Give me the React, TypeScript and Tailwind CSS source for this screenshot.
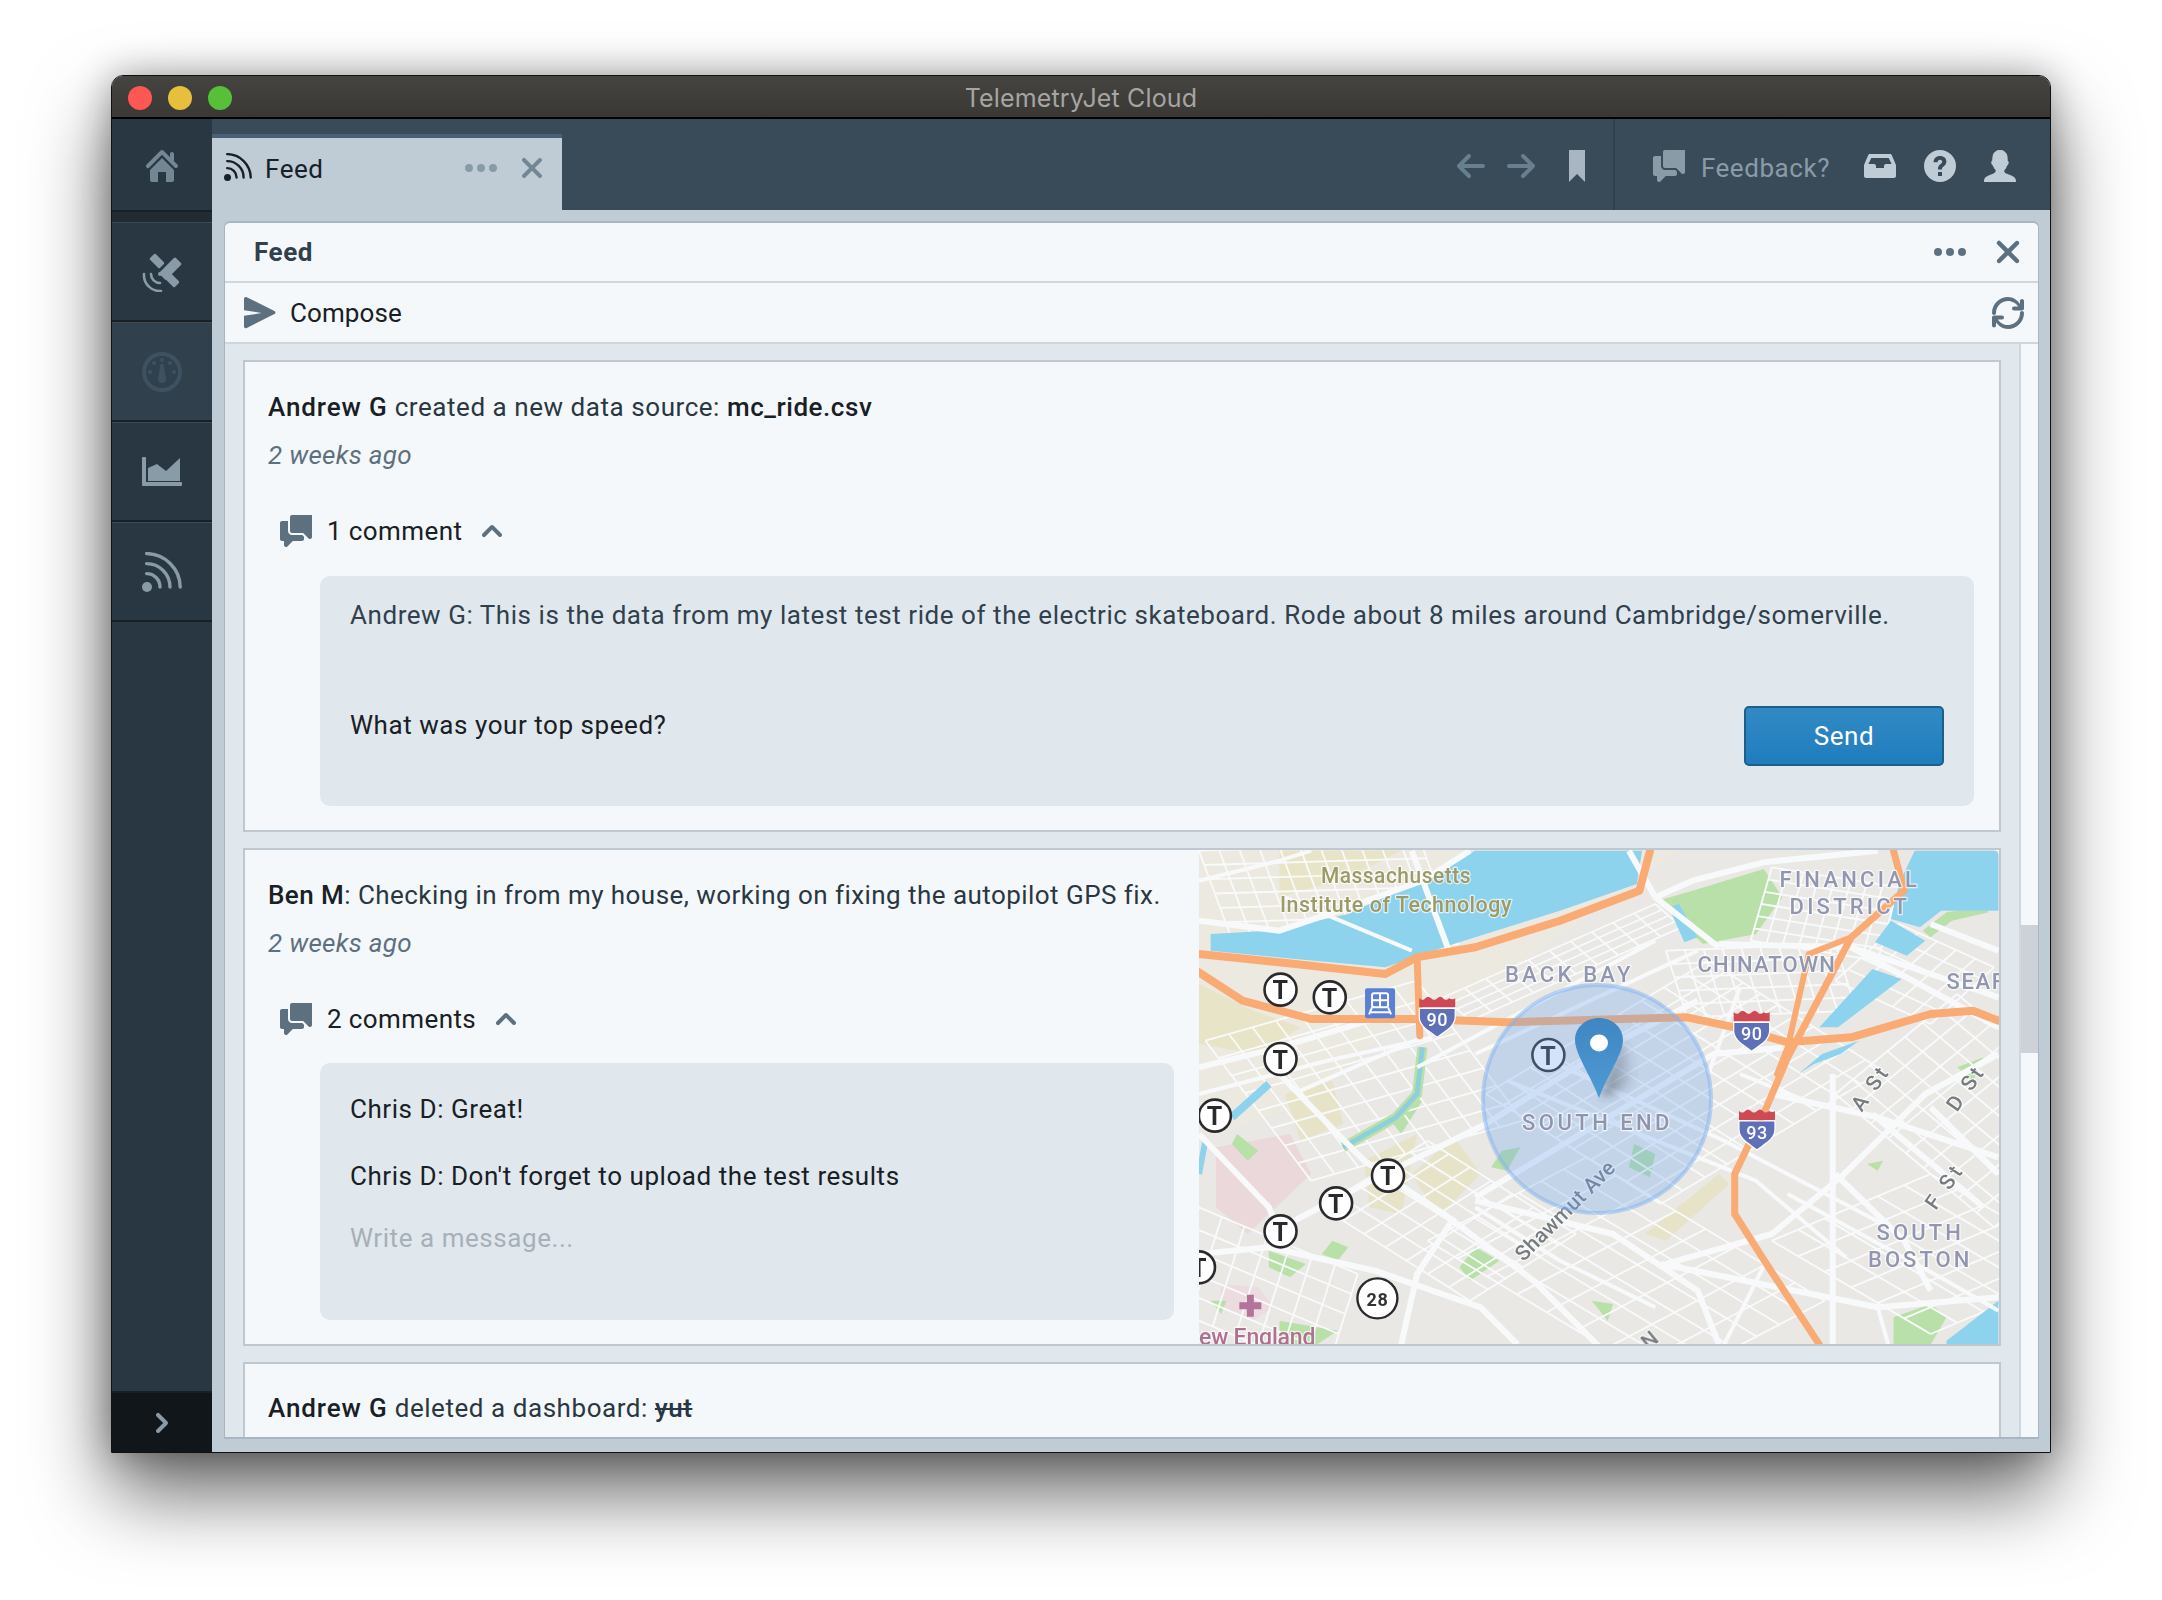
import type { ReactNode } from "react";

// Blueprint style icon paths, drawn on a 16 unit box
const HOME = "M2 10v5c0 .55.45 1 1 1h3v-5h4v5h3c.55 0 1-.45 1-1v-5L8 4l-6 6zm13.71-2.71L14 5.59V2c0-.55-.45-1-1-1s-1 .45-1 1v1.59L8.71.29C8.53.11 8.28 0 8 0s-.53.11-.71.29l-7 7a1.003 1.003 0 001.42 1.42L8 2.41l6.29 6.29c.18.19.43.3.71.3a1.003 1.003 0 00.71-1.71z";
const CHAT = "M6 10c-1.1 0-2-.9-2-2V3H1c-.55 0-1 .45-1 1v8c0 .55.45 1 1 1h1v2a1.003 1.003 0 001.71.71L6.41 13H11c.55 0 1-.45 1-1v-1.17l-.83-.83H6zm9-10H6c-.55 0-1 .45-1 1v7c0 .55.45 1 1 1h5.59l2.71 2.71c.17.18.42.29.7.29.55 0 1-.45 1-1V9c.55 0 1-.45 1-1V1c0-.55-.45-1-1-1z";
const CROSS = "M9.41 8l3.29-3.29c.19-.18.3-.43.3-.71a1.003 1.003 0 00-1.71-.71L8 6.59l-3.29-3.3a1.003 1.003 0 00-1.42 1.42L6.59 8 3.3 11.29c-.19.18-.3.43-.3.71a1.003 1.003 0 001.71.71L8 9.41l3.29 3.29c.18.19.43.3.71.3a1.003 1.003 0 00.71-1.71L9.41 8z";
const MORE = "M2 6a2 2 0 100 4 2 2 0 100-4zM14 6a2 2 0 100 4 2 2 0 100-4zM8 6a2 2 0 100 4 2 2 0 100-4z";
const ARROW_LEFT = "M13.99 6.99H4.41L7.7 3.7c.18-.18.29-.43.29-.71a1.003 1.003 0 00-1.71-.71l-5 5c-.18.18-.29.43-.29.71 0 .28.11.53.29.71l5 5a1.003 1.003 0 001.42-1.42L4.41 8.99H14c.55 0 1-.45 1-1s-.45-1-1.01-1z";
const ARROW_RIGHT = "M14.7 7.29l-5-5a.965.965 0 00-.71-.3 1.003 1.003 0 00-.71 1.71l3.29 3.29H1.99c-.55 0-1 .45-1 1s.45 1 1 1h9.59l-3.29 3.29a1.003 1.003 0 001.42 1.42l5-5c.18-.18.29-.43.29-.71 0-.28-.12-.52-.3-.7z";
const BOOKMARK = "M4 0h8v16l-4-4-4 4z";
const INBOX = "M13.91 2.6c-.16-.36-.51-.6-.92-.6h-10c-.41 0-.77.25-.92.6L0 7.45V13c0 .55.45 1 1 1h14c.55 0 1-.45 1-1V7.45L13.91 2.6zM11 7c-.55 0-1 .45-1 1v1H6V8c0-.55-.45-1-1-1H2.2l1.44-3h8.72l1.44 3H11z";
const HELP = "M8 0a8 8 0 100 16A8 8 0 008 0zM7 11h2v2H7v-2zm1-8c1.9 0 3.2 1.1 3.2 2.8 0 1.2-.7 1.9-1.4 2.4-.6.4-.8.7-.8 1.3v.2H7v-.4c0-1.1.5-1.7 1.2-2.2.6-.4.9-.7.9-1.2 0-.6-.5-1-1.1-1-.7 0-1.2.5-1.2 1.2H4.8C4.8 4.2 6.1 3 8 3z";
const PERSON = "M15.68 14.32c-.46-1.05-2.68-1.75-4.16-2.4-1.48-.65-1.28-1.05-1.33-1.59-.01-.07-.01-.15-.01-.23.51-.45.92-1.07 1.19-1.78 0 0 .01-.04.02-.05.06-.15.11-.32.15-.48.34-.07.54-.44.61-.78.08-.14.23-.48.2-.87-.05-.5-.25-.73-.47-.82v-.09c0-.63-.06-1.55-.17-2.15A3.671 3.671 0 0010.32.72C9.68.25 8.79 0 8 0s-1.68.25-2.31.72c-.61.45-1.06 1.09-1.28 1.85-.05.17-.09.34-.12.51-.12.6-.17 1.51-.17 2.14v.08c-.24.09-.45.32-.5.83-.03.38.13.72.2.86.08.35.28.72.63.78.04.17.09.33.15.49 0 .01.01.02.01.03l.01.01c.27.72.7 1.35 1.22 1.8 0 .07-.01.14-.01.21-.05.54.1.94-1.37 1.59-1.48.65-3.7 1.35-4.16 2.4-.46 1.05-.27 1.67-.27 1.67h15.92c-.01.01.18-.61-.28-1.66z";
const REFRESH = "M15 1c-.55 0-1 .45-1 1v1.46C12.54 1.38 10.43 0 8 0 3.58 0 0 3.58 0 8c0 .55.45 1 1 1s1-.45 1-1c0-3.31 2.69-6 6-6 2.13 0 3.99 1.11 5.06 2.78H11c-.55 0-1 .45-1 1s.45 1 1 1h4c.55 0 1-.45 1-1V2c0-.55-.45-1-1-1zm0 6c-.55 0-1 .45-1 1 0 3.31-2.69 6-6 6-2.13 0-3.99-1.11-5.06-2.78H5c.55 0 1-.45 1-1s-.45-1-1-1H1c-.55 0-1 .45-1 1v4c0 .55.45 1 1 1s1-.45 1-1v-1.46C3.46 14.62 5.57 16 8 16c4.42 0 8-3.58 8-8 0-.55-.45-1-1-1z";
const CHEVRON_UP = "M12.71 9.29l-4-4C8.53 5.11 8.28 5 8 5s-.53.11-.71.29l-4 4a1.003 1.003 0 001.42 1.42L8 7.41l3.29 3.29c.18.19.43.3.71.3a1.003 1.003 0 00.71-1.71z";
const CHEVRON_RIGHT = "M10.71 7.29l-4-4a1.003 1.003 0 00-1.42 1.42L8.59 8 5.3 11.29c-.19.18-.3.43-.3.71a1.003 1.003 0 001.71.71l4-4c.18-.18.29-.43.29-.71 0-.28-.11-.53-.29-.71z";
const SEND = "M1.4.1l13.8 6.9c.5.25.65.75.4 1.2-.1.15-.25.3-.4.35L1.4 15.5C.95 15.75.4 15.6.15 15.2.05 15.05 0 14.9 0 14.7V9.4L8.8 8 0 6.6V.9C0 .4.4 0 .9 0c.2 0 .35.05.5.1z";

const Icon = ({ d, size = 32, className }: { d: string; size?: number; className: string }) => (
    <svg viewBox="0 0 16 16" width={size} height={size} className={`shrink-0 fill-current ${className}`}>
        <path d={d} fillRule="evenodd" />
    </svg>
);

const RssIcon = ({ size, className }: { size: number; className: string }) => (
    <svg viewBox="0 0 40 40" width={size} height={size} className={`shrink-0 ${className}`}>
        <circle cx="5" cy="35" r="5" fill="currentColor" />
        <g fill="none" stroke="currentColor" strokeWidth="3.4" strokeLinecap="round">
            <path d="M4.6 1.6A34 34 0 0 1 38.2 35" />
            <path d="M4.6 11.6A23.4 23.4 0 0 1 28 35" />
            <path d="M4.6 21.6A13.4 13.4 0 0 1 18 35" />
        </g>
    </svg>
);

const SatelliteIcon = () => (
    <svg viewBox="0 0 40 40" width={40} height={40} className="text-[#8a9ba8]">
        <g fill="currentColor">
            <rect x="17" y="12" width="23" height="10" rx="1.5" transform="rotate(-45 28 17)" />
            <rect x="8" y="5" width="14" height="8" rx="1.5" transform="rotate(45 15 9)" />
            <rect x="23" y="24" width="14" height="8" rx="1.5" transform="rotate(45 30 28)" />
            <circle cx="18" cy="22" r="2" />
        </g>
        <g fill="none" stroke="currentColor" strokeWidth="2.6" strokeLinecap="round">
            <path d="M9 22a9 9 0 0 0 9 9" />
            <path d="M2 22a16 16 0 0 0 17 17" />
        </g>
    </svg>
);

const GaugeIcon = () => (
    <svg viewBox="0 0 40 40" width={40} height={40} className="text-[#3e5160]">
        <circle cx="20" cy="20" r="18" fill="none" stroke="currentColor" strokeWidth="4" />
        <g fill="currentColor">
            <circle cx="20" cy="8" r="2" />
            <circle cx="12" cy="11" r="2" />
            <circle cx="28" cy="11" r="2" />
            <circle cx="8" cy="20" r="2" />
            <circle cx="32" cy="20" r="2" />
            <path d="M18.5 12h3l2.5 15a4 4 0 0 1-8 0z" />
        </g>
    </svg>
);

const AreaChartIcon = () => (
    <svg viewBox="0 0 40 32" width={40} height={32} className="mt-[2px] text-[#8a9ba8]">
        <path fill="currentColor" d="M0 1a1 1 0 0 1 1-1h2a1 1 0 0 1 1 1v24h35a1 1 0 0 1 1 1v2a1 1 0 0 1-1 1H1a1 1 0 0 1-1-1z" />
        <path fill="currentColor" d="M6 11l9-4 9 7L38 1v23H6z" />
    </svg>
);

// Map is traced in the coordinates of a reference crop, then mapped to the 800x495 box
const mx = (x: number) => (x - 18) / 1.889;
const my = (y: number) => (y - 28) / 3;
const pts = (list: number[]) => {
    let out = "";
    for (let i = 0; i < list.length; i += 2) out += `${mx(list[i]).toFixed(1)},${my(list[i + 1]).toFixed(1)} `;
    return out;
};

const MAJOR_ROADS = [
    [18, 240, 170, 270, 300, 200, 440, 120, 530, 30],
    [420, 30, 490, 330],
    [150, 1180, 330, 1030, 560, 850, 800, 610, 960, 480],
    [18, 680, 170, 620, 380, 520],
    [540, 1070, 760, 860, 990, 640, 1130, 620],
    [170, 700, 280, 880, 330, 960, 480, 1120, 650, 1320, 770, 1512],
    [540, 1080, 800, 1180, 960, 1350, 1000, 1512],
    [1215, 700, 1215, 1512],
    [1100, 760, 1300, 830, 1528, 950],
    [1528, 640, 1390, 760, 1230, 1010, 1100, 1180, 900, 1270],
    [890, 1270, 1300, 1400, 1528, 1370],
    [1250, 320, 1528, 560],
    [1400, 250, 1528, 330],
    [1290, 820, 1500, 1100],
    [1220, 1000, 1350, 1200, 1400, 1350],
    [1400, 800, 1528, 1000],
    [1000, 320, 880, 170, 830, 30],
    [880, 170, 950, 120, 1085, 65, 1300, 30],
    [1000, 310, 1250, 320, 1400, 400, 1528, 470],
    [18, 1240, 150, 1220, 350, 1290, 550, 1400, 620, 1512],
    [400, 1512, 430, 1300, 500, 1130],
    [18, 880, 150, 1100, 170, 1180],
    [430, 680, 880, 300],
    [540, 640, 960, 330],
    [600, 720, 1070, 1020, 1240, 1250],
    [680, 660, 1010, 900, 1310, 1150],
    [18, 760, 260, 660, 460, 590],
    [210, 750, 440, 590],
    [540, 1100, 700, 1260, 880, 1400],
    [1090, 1260, 1010, 1512],
    [1300, 1400, 1320, 1512],
    [1130, 1060, 1430, 1320, 1528, 1410],
    [1040, 700, 1180, 790],
    [1040, 440, 980, 700],
    [180, 170, 420, 330],
    [18, 120, 170, 60, 230, 30],
];

// blocks of small parallel streets: origin, two directions, number of cells
const STREET_GRIDS = [
    { o: [480, 470], u: [400, -280], v: [50, 70], nu: 10, nv: 4 },
    { o: [560, 760], u: [420, -400], v: [330, 330], nu: 10, nv: 10 },
    { o: [1220, 760], u: [300, 400], v: [230, -300], nu: 9, nv: 7 },
    { o: [1100, 1200], u: [300, 280], v: [300, -200], nu: 6, nv: 6 },
    { o: [30, 600], u: [400, -180], v: [200, 420], nu: 9, nv: 8 },
    { o: [18, 30], u: [420, -20], v: [70, 300], nu: 11, nv: 7 },
    { o: [450, 1200], u: [450, 430], v: [300, -250], nu: 8, nv: 7 },
    { o: [250, 1100], u: [200, -200], v: [280, 280], nu: 6, nv: 7 },
    { o: [18, 1100], u: [300, 200], v: [-60, 300], nu: 7, nv: 5 },
    { o: [900, 330], u: [320, -20], v: [40, 200], nu: 9, nv: 5 },
    { o: [1100, 80], u: [240, 60], v: [-40, 220], nu: 8, nv: 6 },
    { o: [1340, 250], u: [180, 130], v: [-120, 170], nu: 5, nv: 5 },
];

const streetLines = () => {
    const lines: number[][] = [];
    for (const g of STREET_GRIDS) {
        for (let i = 0; i <= g.nu; i++) {
            const sx = g.o[0] + (g.u[0] * i) / g.nu;
            const sy = g.o[1] + (g.u[1] * i) / g.nu;
            lines.push([sx, sy, sx + g.v[0], sy + g.v[1]]);
        }
        for (let i = 0; i <= g.nv; i++) {
            const sx = g.o[0] + (g.v[0] * i) / g.nv;
            const sy = g.o[1] + (g.v[1] * i) / g.nv;
            lines.push([sx, sy, sx + g.u[0], sy + g.u[1]]);
        }
    }
    return lines;
};

const PARKS = [
    [950, 150, 1085, 85, 1120, 170, 1070, 280, 970, 310, 885, 180],
    [540, 1220, 585, 1260, 530, 1320, 510, 1280],
    [150, 1230, 220, 1270, 190, 1310, 150, 1280],
    [90, 880, 130, 930, 110, 960, 80, 910],
    [270, 1200, 300, 1220, 280, 1260, 250, 1240],
    [1330, 1430, 1400, 1390, 1430, 1430, 1400, 1512, 1330, 1512],
    [1450, 680, 1500, 650, 1480, 720],
    [590, 930, 625, 920, 600, 990, 570, 980],
    [840, 910, 880, 940, 870, 1010, 830, 980],
    [760, 1380, 800, 1390, 790, 1440],
    [1280, 970, 1310, 960, 1300, 990],
    [40, 1380, 70, 1380, 60, 1420],
    [170, 1440, 280, 1470, 240, 1512, 170, 1512],
    [420, 770, 440, 780, 400, 880, 385, 850],
    [1385, 270, 1430, 215, 1500, 200, 1510, 215, 1440, 240, 1400, 290],
];

const TAN_ZONES = [
    [420, 1000, 500, 890, 550, 1000, 470, 1130],
    [180, 760, 270, 720, 290, 850, 210, 900],
    [1000, 1000, 1020, 1030, 900, 1200, 860, 1180],
    [18, 430, 120, 510, 210, 560, 130, 640, 18, 610],
    [170, 30, 400, 30, 300, 110, 170, 170],
    [330, 960, 430, 880, 400, 1120, 340, 1100],
];

const T_STOPS = [[172, 447], [265, 470], [172, 655], [48, 825], [375, 1005], [277, 1088], [172, 1172], [678, 643], [18, 1280]];

const MapLabel = ({ x, y, w, size, fill, rot, children, anchor = "middle", squeeze }: { x: number; y: number; w: number; size: number; fill: string; rot?: number; children: ReactNode; anchor?: "middle" | "start"; squeeze?: boolean }) => (
    <text
        x={mx(x)}
        y={my(y)}
        textAnchor={anchor}
        dominantBaseline="central"
        fontSize={size}
        fontWeight={500}
        fill={fill}
        stroke="#ffffff"
        strokeOpacity={0.7}
        strokeWidth={2.5}
        textLength={w}
        lengthAdjust={squeeze ? "spacingAndGlyphs" : "spacing"}
        style={{ fontFamily: "Roboto, sans-serif", paintOrder: "stroke", strokeLinejoin: "round" }}
        transform={rot ? `rotate(${rot} ${mx(x)} ${my(y)})` : undefined}
    >
        {children}
    </text>
);

const Shield = ({ x, y, label }: { x: number; y: number; label: string }) => (
    <g transform={`translate(${mx(x)} ${my(y)})`}>
        <path d="M-18 -19q4 3 6 0q3 -3 6 0q3 3 6 0q3 -3 6 0q2 3 6 0q3 2 6 0v9h-36z" fill="#cf4a55" />
        <path d="M-18 -9h36v8c0 10 -9 14 -18 21c-9 -7 -18 -11 -18 -21z" fill="#5d70b8" stroke="#fff" strokeWidth="1.2" />
        <text x="0" y="2" textAnchor="middle" dominantBaseline="central" fontSize="18" fontWeight="500" fill="#fff" style={{ fontFamily: "Roboto, sans-serif" }}>{label}</text>
    </g>
);

const BostonMap = () => (
    <svg viewBox="0 0 800 495" width={800} height={495} className="block">
        <defs>
            <linearGradient id="pinFill" x1="0" y1="0" x2="0" y2="1">
                <stop offset="0" stopColor="#3f86c2" />
                <stop offset="1" stopColor="#4f9ad6" />
            </linearGradient>
            <linearGradient id="pinShadow" x1="0" y1="0" x2="1" y2="0">
                <stop offset="0" stopColor="#3a4550" stopOpacity="0.6" />
                <stop offset="1" stopColor="#3a4550" stopOpacity="0" />
            </linearGradient>
            <filter id="soft"><feGaussianBlur stdDeviation="0.6" /></filter>
            <filter id="softer"><feGaussianBlur stdDeviation="5" /></filter>
        </defs>

        <rect width="800" height="495" fill="#e9e8e5" />
        <g filter="url(#soft)">
            <polygon points="0,0 480,0 300,130 190,180 90,260 0,290" fill="#ece9e0" />
            {TAN_ZONES.map((z, i) => <polygon key={i} points={pts(z)} fill="#e6e1bf" opacity="0.75" />)}
            <polygon points={pts([50, 920, 190, 880, 230, 1000, 110, 1180, 50, 1100])} fill="#ebd8da" />
            <polygon points={pts([60, 1330, 130, 1340, 160, 1400, 120, 1440, 60, 1400])} fill="#ecdcdf" />
            {PARKS.map((p, i) => <polygon key={i} points={pts(p)} fill="#b9e0a8" />)}

            {streetLines().map((r, i) => (
                <polyline key={i} points={pts(r)} stroke="#f9fafb" strokeWidth="1.8" fill="none" />
            ))}

            {/* water */}
            <polygon points={pts([40, 330, 40, 280, 150, 270, 300, 220, 420, 130, 540, 30, 855, 30, 845, 130, 700, 210, 600, 260, 480, 320, 370, 380, 200, 355])} fill="#8dd3ee" />
            <polygon points={pts([1370, 30, 1528, 30, 1528, 210, 1420, 210, 1380, 260, 1325, 235, 1340, 130])} fill="#8dd3ee" />
            <polygon points={pts([1325, 240, 1390, 300, 1355, 345, 1295, 305])} fill="#8dd3ee" />
            <polygon points={pts([1290, 385, 1345, 415, 1225, 560, 1190, 560])} fill="#8dd3ee" />
            <polygon points={pts([1150, 700, 1195, 640, 1265, 600, 1230, 640, 1180, 670])} fill="#8dd3ee" />
            <polygon points={pts([1430, 1500, 1528, 1380, 1528, 1512, 1430, 1512])} fill="#8dd3ee" />
            <polygon points={pts([905, 200, 925, 190, 960, 290, 935, 305])} fill="#8dd3ee" />
            <polyline points={pts([80, 830, 150, 730])} stroke="#8dd3ee" strokeWidth="8" fill="none" />
            <polyline points={pts([290, 920, 390, 830, 430, 760, 440, 620])} stroke="#b9e0a8" strokeWidth="10" fill="none" />
            <polyline points={pts([290, 920, 390, 830, 430, 760, 440, 620])} stroke="#8dcfdc" strokeWidth="5" fill="none" />
            <polyline points={pts([18, 1000, 30, 900])} stroke="#8dd3ee" strokeWidth="6" fill="none" />

            {MAJOR_ROADS.map((r, i) => (
                <polyline key={i} points={pts(r)} stroke="#f8f9fb" strokeWidth={i < 22 ? 6 : 4} fill="none" strokeLinejoin="round" />
            ))}

            {/* highways */}
            <g stroke="#f9ab73" fill="none" strokeLinejoin="round" strokeLinecap="round">
                <polyline points={pts([18, 340, 200, 370, 370, 400, 430, 350, 540, 320, 700, 240, 850, 150, 870, 30])} strokeWidth="8" />
                <polyline points={pts([18, 395, 100, 480, 230, 535, 430, 535, 600, 545, 940, 530, 1030, 560, 1130, 605, 1250, 590, 1400, 520, 1480, 510, 1528, 540])} strokeWidth="8" />
                <polyline points={pts([430, 350, 435, 585])} strokeWidth="7" />
                <polyline points={pts([1330, 30, 1350, 150, 1250, 290, 1130, 650, 1090, 800, 1030, 1000, 1030, 1120, 1090, 1270, 1190, 1512])} strokeWidth="7" />
                <polyline points={pts([1250, 290, 1170, 340, 1130, 620, 1110, 700])} strokeWidth="6" />
            </g>
        </g>

        <g filter="url(#soft)">
            <MapLabel x={390} y={105} w={150} size={22} fill="#9c9a66" squeeze>Massachusetts</MapLabel>
            <MapLabel x={390} y={190} w={232} size={22} fill="#9c9a66" squeeze>Institute of Technology</MapLabel>
            <MapLabel x={1245} y={115} w={138} size={22} fill="#9197b0">FINANCIAL</MapLabel>
            <MapLabel x={1245} y={197} w={118} size={22} fill="#9197b0">DISTRICT</MapLabel>
            <MapLabel x={715} y={400} w={126} size={22} fill="#9197b0">BACK BAY</MapLabel>
            <MapLabel x={1090} y={370} w={138} size={22} fill="#9197b0">CHINATOWN</MapLabel>
            <MapLabel x={1430} y={422} w={58} size={22} fill="#9197b0" anchor="start">SEAF</MapLabel>
            <MapLabel x={1378} y={1175} w={85} size={22} fill="#9197b0">SOUTH</MapLabel>
            <MapLabel x={1378} y={1255} w={102} size={22} fill="#9197b0">BOSTON</MapLabel>
            <MapLabel x={1285} y={745} w={48} size={21} fill="#777c80" rot={-55}>A St</MapLabel>
            <MapLabel x={1465} y={745} w={48} size={21} fill="#777c80" rot={-55}>D St</MapLabel>
            <MapLabel x={1425} y={1040} w={48} size={21} fill="#777c80" rot={-55}>F St</MapLabel>
            <MapLabel x={710} y={1110} w={132} size={21} fill="#777c80" rot={-45}>Shawmut Ave</MapLabel>
            <MapLabel x={18} y={1490} w={117} size={23} fill="#b0708f" anchor="start">ew England</MapLabel>
            <MapLabel x={870} y={1498} w={14} size={21} fill="#777c80" rot={-40}>N</MapLabel>

            {T_STOPS.map(([x, y], i) => (
                <g key={i}>
                    <circle cx={mx(x)} cy={my(y)} r="16" fill="#fff" stroke="#2c2c2e" strokeWidth="2.6" />
                    <text x={mx(x)} y={my(y) + 1} textAnchor="middle" dominantBaseline="central" fontSize="25" fontWeight="700" fill="#2c2c2e" style={{ fontFamily: "Roboto, sans-serif" }}>T</text>
                </g>
            ))}

            <g transform={`translate(${mx(360)} ${my(488)})`}>
                <rect x="-15" y="-15" width="30" height="30" rx="2" fill="#5a7fd4" />
                <rect x="-8" y="-10" width="16" height="14" rx="2" fill="none" stroke="#fff" strokeWidth="2" />
                <path d="M0 -10v14M-8 -3h16M-8 4l-3 7M8 4l3 7M-10 9h20" stroke="#fff" strokeWidth="2" fill="none" />
            </g>

            <Shield x={468} y={530} label="90" />
            <Shield x={1062} y={572} label="90" />
            <Shield x={1072} y={868} label="93" />

            <g transform={`translate(${mx(355)} ${my(1373)})`}>
                <circle r="20" fill="#fff" stroke="#2c2c2e" strokeWidth="2.4" />
                <text y="1" textAnchor="middle" dominantBaseline="central" fontSize="18" fontWeight="700" fill="#333" style={{ fontFamily: "Roboto, sans-serif" }}>28</text>
            </g>
            <path d={`M${mx(115) - 3.5} ${my(1395) - 11}h7v7.5h7.5v7h-7.5v7.5h-7v-7.5h-7.5v-7h7.5z`} fill="#b4739a" />
        </g>

        <circle cx="398" cy="249" r="114" fill="#6ea5ee" fillOpacity="0.3" stroke="#82b2f0" strokeOpacity="0.5" strokeWidth="4" />
        <g filter="url(#soft)">
            <MapLabel x={768} y={845} w={148} size={22} fill="#8f95ae">SOUTH END</MapLabel>
        </g>

        <path d="M402 247 L420 190 C430 198 438 216 436 232 C426 240 412 245 402 247z" fill="url(#pinShadow)" filter="url(#softer)" />
        <path d="M400 248 C392 226 376 204 376 190 C376 177 387 168 400 168 C413 168 424 177 424 190 C424 204 408 226 400 248z" fill="url(#pinFill)" />
        <ellipse cx="400" cy="193" rx="9" ry="8.5" fill="#fff" />
    </svg>
);

const CommentToggle = ({ label }: { label: string }) => (
    <div className="mt-[40px] ml-[12px] flex h-[36px] items-center tracking-[0.4px]">
        <Icon d={CHAT} className="text-[#5c7080]" />
        <span className="ml-[15px] text-[#182026]">{label}</span>
        <Icon d={CHEVRON_UP} size={32} className="ml-[14px] text-[#5c7080]" />
    </div>
);

const Stamp = () => <div className="mt-[12px] h-[36px] leading-[36px] italic tracking-[0.3px] text-[#5c7080]">2 weeks ago</div>;

const SideItem = ({ children, active }: { children: ReactNode; active?: boolean }) => (
    <div className={`flex h-[100px] items-center justify-center border-t border-[#394b59] border-b-[2px] border-b-[#182026] ${active ? "bg-[#30404d]" : "bg-[#293742]"}`}>
        {children}
    </div>
);

export default function App() {
    return (
        <div className="h-[1600px] overflow-hidden bg-white pt-[75px] pl-[111px] text-[26px] leading-[36px] tracking-[0.55px] [font-family:Roboto,sans-serif]">
            <div className="flex h-[1378px] w-[1940px] flex-col overflow-hidden rounded-t-[12px] border border-[#111] shadow-[0_40px_80px_rgba(0,0,0,0.6),0_0_36px_rgba(0,0,0,0.3)]">
                {/* title bar */}
                <div className="relative flex h-[43px] shrink-0 items-center justify-center border-b-[2px] border-black bg-gradient-to-b from-[#464440] to-[#3a3835] pt-[2px]">
                    <div className="absolute left-[16px] top-[10px] flex gap-[16px]">
                        <span className="size-[24px] rounded-full bg-[#fc5753]" />
                        <span className="size-[24px] rounded-full bg-[#e6bf3c]" />
                        <span className="size-[24px] rounded-full bg-[#57c038]" />
                    </div>
                    <span className="text-[25px] tracking-[0.15px] text-[#a6a5a2] [font-family:Inter,sans-serif]">TelemetryJet Cloud</span>
                </div>

                <div className="flex min-h-0 flex-1">
                    {/* sidebar */}
                    <div className="flex w-[100px] shrink-0 flex-col bg-[#293742]">
                        <div className="flex h-[91px] items-start justify-center pt-[31px]">
                            <Icon d={HOME} className="text-[#738694]" />
                        </div>
                        <div className="h-[12px] border-t-[2px] border-[#182026] bg-[#202b33]" />
                        <SideItem><SatelliteIcon /></SideItem>
                        <SideItem active><GaugeIcon /></SideItem>
                        <SideItem><AreaChartIcon /></SideItem>
                        <SideItem><RssIcon size={40} className="text-[#8a9ba8]" /></SideItem>
                        <div className="flex-1" />
                        <div className="flex h-[61px] items-center justify-center border-t-[2px] border-[#182026] bg-[#10161a]">
                            <Icon d={CHEVRON_RIGHT} size={32} className="text-[#8a9ba8]" />
                        </div>
                    </div>

                    <div className="flex min-w-0 flex-1 flex-col bg-[#bfccd6]">
                        {/* top bar with tab */}
                        <div className="flex h-[91px] shrink-0 bg-[#394b59]">
                            <div className="mt-[15px] flex h-[76px] w-[350px] items-start border-t-[4px] border-[#4a6078] bg-[#bfccd6] pl-[12px] pt-[13px]">
                                <RssIcon size={28} className="mt-[2px] text-[#182026]" />
                                <span className="ml-[13px] text-[#182026]">Feed</span>
                                <Icon d={MORE} size={32} className="ml-[141px] mt-[1px] text-[#8a9ba8]" />
                                <Icon d={CROSS} size={32} className="ml-[19px] mt-[1px] text-[#738694]" />
                            </div>
                            <div className="flex flex-1 items-start justify-end pt-[31px]">
                                <Icon d={ARROW_LEFT} className="text-[#687f91]" />
                                <Icon d={ARROW_RIGHT} className="ml-[18px] text-[#687f91]" />
                                <Icon d={BOOKMARK} className="ml-[24px] text-[#a7b6c2]" />
                                <div className="-mt-[31px] ml-[20px] h-[91px] border-l-[2px] border-[#30404d]" />
                                <Icon d={CHAT} className="ml-[38px] text-[#8a9ba8]" />
                                <span className="ml-[16px] text-[#8a9ba8]">Feedback?</span>
                                <Icon d={INBOX} className="ml-[34px] text-[#bfccd6]" />
                                <Icon d={HELP} className="ml-[28px] text-[#bfccd6]" />
                                <Icon d={PERSON} className="ml-[28px] mr-[34px] text-[#bfccd6]" />
                            </div>
                        </div>

                        {/* feed panel */}
                        <div className="min-h-0 flex-1 pt-[11px] pr-[11px] pb-[13px] pl-[12px]">
                            <div className="flex h-full flex-col overflow-hidden rounded-t-[6px] border border-b-[2px] border-t-[2px] border-[#a7b6c2] bg-[#f5f8fa]">
                                <div className="flex h-[60px] shrink-0 items-center border-b-[2px] border-[#cfd6dc] pl-[29px] pr-[14px]">
                                    <span className="font-bold text-[#30404d]">Feed</span>
                                    <div className="flex-1" />
                                    <Icon d={MORE} size={32} className="text-[#5c7080]" />
                                    <Icon d={CROSS} size={36} className="ml-[24px] -mr-[2px] text-[#5c7080]" />
                                </div>
                                <div className="flex h-[61px] shrink-0 items-center border-b-[2px] border-[#cfd6dc] pl-[19px] pr-[14px]">
                                    <Icon d={SEND} className="text-[#5c7080]" />
                                    <span className="ml-[14px] tracking-[0.1px] text-[#182026]">Compose</span>
                                    <div className="flex-1" />
                                    <Icon d={REFRESH} className="text-[#5c7080]" />
                                </div>

                                <div className="flex min-h-0 flex-1 bg-[#e1e8ed]">
                                    <div className="ml-[18px] flex w-[1758px] shrink-0 flex-col gap-[16px] pt-[16px] text-[#293742]">
                                        <div className="h-[472px] shrink-0 border-2 border-[#bfc8d0] bg-[#f5f8fa] pl-[23px] pt-[27px]">
                                            <div className="h-[36px] tracking-[0.55px]"><b className="font-medium tracking-[0.9px] text-[#182026]">Andrew G</b> created a new data source: <b className="font-medium text-[#182026]">mc_ride.csv</b></div>
                                            <Stamp />
                                            <CommentToggle label="1 comment" />
                                            <div className="mt-[27px] ml-[52px] h-[230px] w-[1654px] rounded-[10px] bg-[#e1e8ed] pl-[30px] pr-[30px] pt-[21px]">
                                                <div className="text-[#30404d]">Andrew G: This is the data from my latest test ride of the electric skateboard. Rode about 8 miles around Cambridge/somerville.</div>
                                                <div className="mt-[73px] flex items-start justify-between">
                                                    <span className="mt-[1px] text-[#182026]">What was your top speed?</span>
                                                    <button className="h-[60px] w-[200px] rounded-[5px] border-2 border-[#1d5f88] bg-gradient-to-b from-[#318ac4] to-[#1f7dbd] text-white">Send</button>
                                                </div>
                                            </div>
                                        </div>

                                        <div className="flex h-[498px] shrink-0 border-2 border-[#bfc8d0] bg-[#f5f8fa]">
                                            <div className="w-[954px] shrink-0 pl-[23px] pt-[27px]">
                                                <div className="h-[36px] tracking-[0.45px]"><b className="font-medium text-[#182026]">Ben M</b>: Checking in from my house, working on fixing the autopilot GPS fix.</div>
                                                <Stamp />
                                                <CommentToggle label="2 comments" />
                                                <div className="mt-[26px] ml-[52px] h-[257px] w-[854px] rounded-[10px] bg-[#e1e8ed] pl-[30px] pt-[28px] text-[#30404d]">
                                                    <div className="text-[#182026]">Chris D: Great!</div>
                                                    <div className="mt-[31px] text-[#182026]">Chris D: Don't forget to upload the test results</div>
                                                    <div className="mt-[26px] text-[#a7b0b8]">Write a message...</div>
                                                </div>
                                            </div>
                                            <div className="overflow-hidden rounded-tr-[6px]"><BostonMap /></div>
                                        </div>

                                        <div className="min-h-[120px] shrink-0 border-2 border-[#bfc8d0] bg-[#f5f8fa] pl-[23px] pt-[26px]">
                                            <b className="font-medium tracking-[0.9px] text-[#182026]">Andrew G</b> deleted a dashboard: <span className="font-medium line-through">yut</span>
                                        </div>
                                    </div>

                                    {/* scrollbar */}
                                    <div className="ml-[18px] w-[20px] shrink-0 border-l-[2px] border-[#cfd6dc] bg-[#f5f8fa]">
                                        <div className="mt-[581px] h-[128px] bg-[#ccd2d7]" />
                                    </div>
                                </div>
                            </div>
                        </div>
                    </div>
                </div>
            </div>
        </div>
    );
}
